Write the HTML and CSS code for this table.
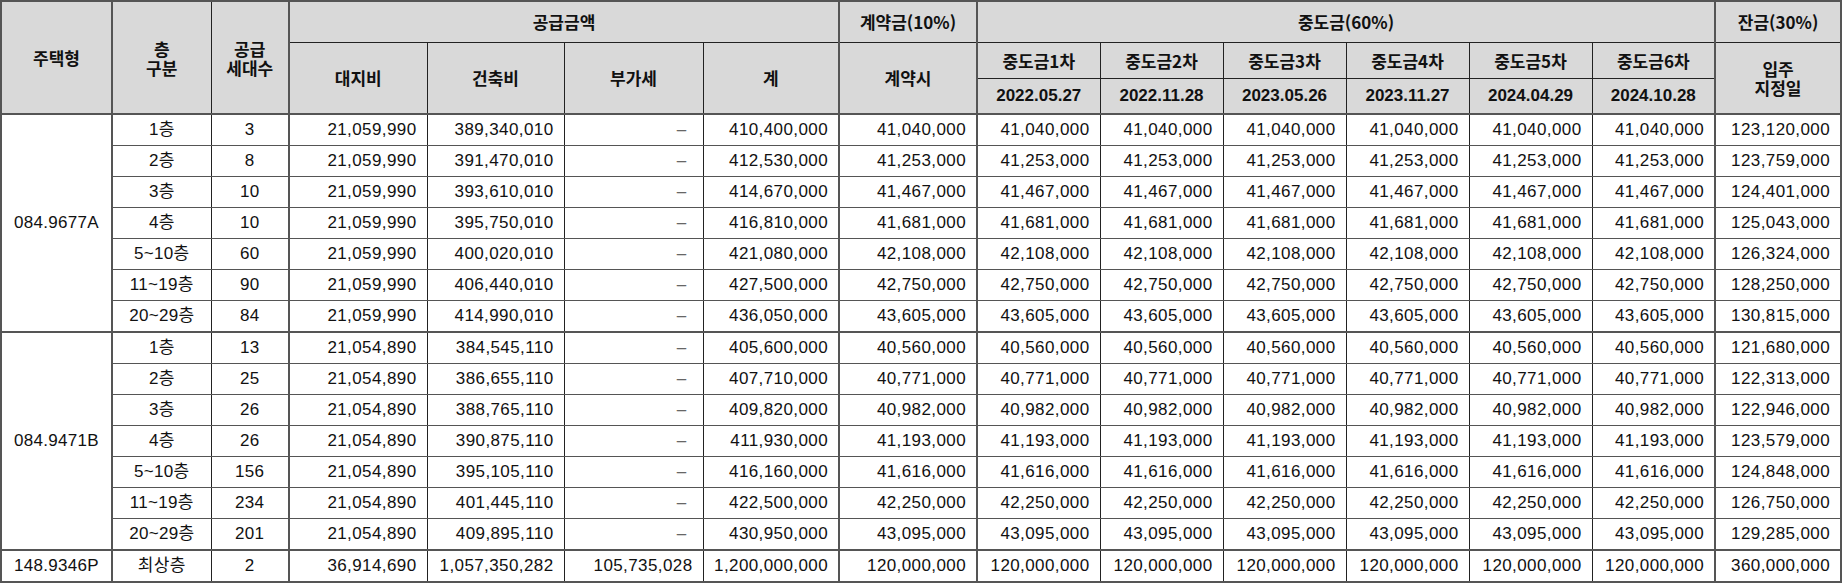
FILE: index.html
```html
<!DOCTYPE html>
<html lang="ko">
<head>
<meta charset="utf-8">
<link rel="stylesheet" href="styles.css">
</head>
<body>
<table class="price">
<colgroup>
<col class="c-type"><col class="c-floor"><col class="c-cnt">
<col class="c-land"><col class="c-build"><col class="c-vat"><col class="c-sum">
<col class="c-dep">
<col class="c-mid"><col class="c-mid"><col class="c-mid"><col class="c-mid"><col class="c-mid"><col class="c-mid">
<col class="c-bal">
</colgroup>
<thead>
<tr class="h1">
<th rowspan="3" class="tl">주택형</th>
<th rowspan="3"><span class="ln">층</span><span class="ln">구분</span></th>
<th rowspan="3" class="tr"><span class="ln">공급</span><span class="ln">세대수</span></th>
<th colspan="4" class="tr">공급금액</th>
<th class="tr">계약금(10%)</th>
<th colspan="6" class="tr">중도금(60%)</th>
<th>잔금(30%)</th>
</tr>
<tr class="h2">
<th rowspan="2">대지비</th>
<th rowspan="2">건축비</th>
<th rowspan="2">부가세</th>
<th rowspan="2" class="tr">계</th>
<th rowspan="2" class="tr">계약시</th>
<th>중도금1차</th><th>중도금2차</th><th>중도금3차</th><th>중도금4차</th><th>중도금5차</th><th class="tr">중도금6차</th>
<th rowspan="2"><span class="ln">입주</span><span class="ln">지정일</span></th>
</tr>
<tr class="h3">
<th>2022.05.27</th><th>2022.11.28</th><th>2023.05.26</th><th>2023.11.27</th><th>2024.04.29</th><th class="tr">2024.10.28</th>
</tr>
</thead>
<tbody id="body"></tbody>
</table>
<script src="app.js"></script>
</body>
</html>
```
FILE: app.js
```js
const groups = [
  { type: "084.9677A", land: "21,059,990", rows: [
    ["1층", "3", "389,340,010", "410,400,000", "41,040,000", "123,120,000"],
    ["2층", "8", "391,470,010", "412,530,000", "41,253,000", "123,759,000"],
    ["3층", "10", "393,610,010", "414,670,000", "41,467,000", "124,401,000"],
    ["4층", "10", "395,750,010", "416,810,000", "41,681,000", "125,043,000"],
    ["5~10층", "60", "400,020,010", "421,080,000", "42,108,000", "126,324,000"],
    ["11~19층", "90", "406,440,010", "427,500,000", "42,750,000", "128,250,000"],
    ["20~29층", "84", "414,990,010", "436,050,000", "43,605,000", "130,815,000"]
  ]},
  { type: "084.9471B", land: "21,054,890", rows: [
    ["1층", "13", "384,545,110", "405,600,000", "40,560,000", "121,680,000"],
    ["2층", "25", "386,655,110", "407,710,000", "40,771,000", "122,313,000"],
    ["3층", "26", "388,765,110", "409,820,000", "40,982,000", "122,946,000"],
    ["4층", "26", "390,875,110", "411,930,000", "41,193,000", "123,579,000"],
    ["5~10층", "156", "395,105,110", "416,160,000", "41,616,000", "124,848,000"],
    ["11~19층", "234", "401,445,110", "422,500,000", "42,250,000", "126,750,000"],
    ["20~29층", "201", "409,895,110", "430,950,000", "43,095,000", "129,285,000"]
  ]},
  { type: "148.9346P", land: "36,914,690", vat: "105,735,028", rows: [
    ["최상층", "2", "1,057,350,282", "1,200,000,000", "120,000,000", "360,000,000"]
  ]}
];
const tb = document.getElementById("body");
let html = "";
groups.forEach(g => {
  g.rows.forEach((r, i) => {
    const cls = i === 0 ? ' class="gs"' : "";
    html += `<tr${cls}>`;
    if (i === 0) html += `<td rowspan="${g.rows.length}" class="ty tl">${g.type}</td>`;
    html += `<td class="ct">${r[0]}</td><td class="ct tr">${r[1]}</td>`;
    html += `<td class="num">${g.land}</td><td class="num">${r[2]}</td>`;
    html += g.vat ? `<td class="num">${g.vat}</td>` : `<td class="num dash">–</td>`;
    html += `<td class="num tr">${r[3]}</td><td class="num tr">${r[4]}</td>`;
    for (let k = 0; k < 6; k++) html += `<td class="num${k === 5 ? " tr" : ""}">${r[4]}</td>`;
    html += `<td class="num">${r[5]}</td></tr>`;
  });
});
tb.innerHTML = html;
```
FILE: styles.css
```css
html, body { margin: 0; padding: 0; background: #fff; }
.price {
  border-collapse: collapse;
  table-layout: fixed;
  width: 1842px;
  font-family: "Liberation Sans", "Noto Sans CJK KR", sans-serif;
  color: #111;
  border: 2px solid #555;
}
.c-type { width: 111px; }
.c-floor { width: 99px; }
.c-cnt { width: 78px; }
.c-land { width: 138px; }
.c-build { width: 137px; }
.c-vat { width: 139px; }
.c-sum { width: 136px; }
.c-dep { width: 138px; }
.c-mid { width: 123px; }
.c-bal { width: 126px; }
th {
  background: #d9d9d9;
  font-family: "Noto Sans CJK KR", sans-serif;
  font-weight: 700;
  font-size: 17px;
  line-height: 21px;
  color: #111;
  border: 1px solid #222;
  padding: 0;
  text-align: center;
  vertical-align: middle;
}
.ln {
  display: block;
  height: 19px;
  line-height: 19px;
}
.h1 { height: 41px; }
.h2 { height: 36px; }
.h3 { height: 36px; }
.h3 th { font-family: "Liberation Sans", sans-serif; font-size: 17px; }
td {
  font-size: 17px;
  line-height: 20px;
  letter-spacing: 0.3px;
  border-left: 1px solid #222;
  border-right: 1px solid #222;
  border-top: 1px solid #555;
  border-bottom: 1px solid #555;
  padding: 0;
  height: 30px;
  vertical-align: middle;
}
.ct { text-align: center; }
.num {
  text-align: right;
  padding-right: 10px;
  font-size: 17px;
  letter-spacing: 0.4px;
}
.dash { color: #666; padding-right: 16px; }
.ty { text-align: center; }
.tr { border-right: 2px solid #555; }
.tl { border-right: 2px solid #555; }
thead tr:last-child th, .h2 th[rowspan] { border-bottom: 2px solid #555; }
.h1 th[rowspan] { border-bottom: 2px solid #555; }
.gs td { border-top: 2px solid #555; }
```
